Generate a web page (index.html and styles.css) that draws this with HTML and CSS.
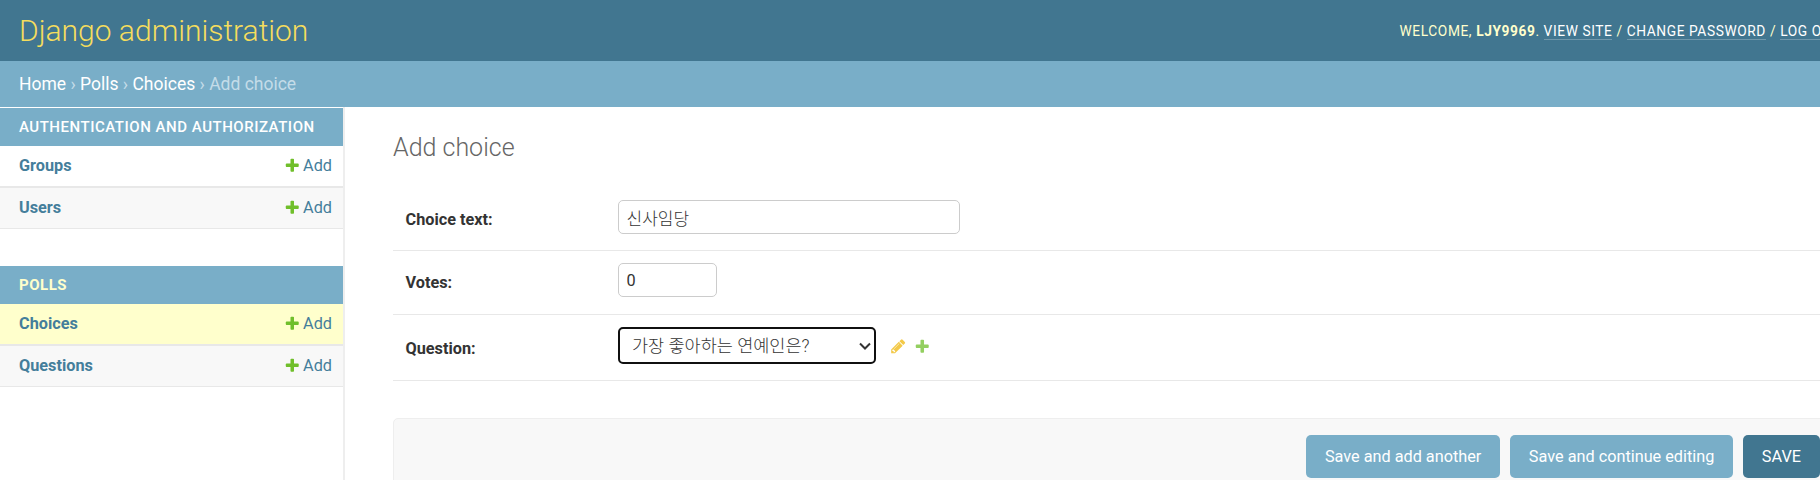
FILE: index.html
```html
<!DOCTYPE html>
<html lang="en">
<head>
    <meta charset="UTF-8">
    <title>Add choice | Django site admin</title>
    <link rel="stylesheet" href="styles.css">
</head>
<body>
    <svg class="icon-defs" width="0" height="0">
        <symbol id="icon-add" viewBox="0 0 1792 1792">
            <path d="M1600 796v192q0 40-28 68t-68 28h-416v416q0 40-28 68t-68 28h-192q-40 0-68-28t-28-68v-416h-416q-40 0-68-28t-28-68v-192q0-40 28-68t68-28h416v-416q0-40 28-68t68-28h192q40 0 68 28t28 68v416h416q40 0 68 28t28 68z"/>
        </symbol>
        <symbol id="icon-change" viewBox="0 0 1792 1792">
            <path d="M491 1536l91-91-235-235-91 91v107h128v128h107zm523-928q0-22-22-22-10 0-17 7l-542 542q-7 7-7 17 0 22 22 22 10 0 17-7l542-542q7-7 7-17zm-54-192l416 416-832 832h-416v-416zm683 96q0 53-37 90l-166 166-416-416 166-165q36-38 90-38 53 0 91 38l235 234q37 39 37 91z"/>
        </symbol>
    </svg>

    <div class="page">
        <header class="site-header">
            <h1 class="branding">Django administration</h1>
            <div class="user-tools">
                Welcome, <strong>ljy9969</strong>.
                <a href="#">View site</a> /
                <a href="#">Change password</a> /
                <a href="#">Log out</a>
            </div>
        </header>

        <nav class="breadcrumbs">
            <a href="#">Home</a> <span class="sep">›</span>
            <a href="#">Polls</a> <span class="sep">›</span>
            <a href="#">Choices</a> <span class="sep">›</span> Add choice
        </nav>

        <div class="main">
            <aside class="sidebar">
                <section class="app">
                    <h2 class="app-caption">Authentication and Authorization</h2>
                    <div class="model-row">
                        <a class="model-name" href="#">Groups</a>
                        <a class="addlink" href="#"><svg class="icon"><use href="#icon-add"/></svg>Add</a>
                    </div>
                    <div class="model-row alt">
                        <a class="model-name" href="#">Users</a>
                        <a class="addlink" href="#"><svg class="icon"><use href="#icon-add"/></svg>Add</a>
                    </div>
                </section>
                <section class="app">
                    <h2 class="app-caption current-app">Polls</h2>
                    <div class="model-row current">
                        <a class="model-name" href="#">Choices</a>
                        <a class="addlink" href="#"><svg class="icon"><use href="#icon-add"/></svg>Add</a>
                    </div>
                    <div class="model-row alt">
                        <a class="model-name" href="#">Questions</a>
                        <a class="addlink" href="#"><svg class="icon"><use href="#icon-add"/></svg>Add</a>
                    </div>
                </section>
            </aside>

            <main class="content">
                <h1 class="page-title">Add choice</h1>
                <form>
                    <div class="form-row">
                        <label class="field-label" for="id_choice_text">Choice text:</label>
                        <input class="text-input wide" id="id_choice_text" type="text" value="신사임당">
                    </div>
                    <div class="form-row votes-row">
                        <label class="field-label" for="id_votes">Votes:</label>
                        <input class="text-input short" id="id_votes" type="text" value="0">
                    </div>
                    <div class="form-row">
                        <label class="field-label" for="id_question">Question:</label>
                        <select class="select-input" id="id_question">
                            <option>가장 좋아하는 연예인은?</option>
                        </select>
                        <a class="related change" href="#"><svg class="icon"><use href="#icon-change"/></svg></a>
                        <a class="related add" href="#"><svg class="icon"><use href="#icon-add"/></svg></a>
                    </div>
                    <div class="submit-row">
                        <button class="btn" type="button">Save and add another</button>
                        <button class="btn" type="button">Save and continue editing</button>
                        <button class="btn default" type="button">SAVE</button>
                    </div>
                </form>
            </main>
        </div>
    </div>
</body>
</html>
```

FILE: styles.css
```css
/* --- General --- */
html, body {
    margin: 0;
    padding: 0;
    height: 100%;
    overflow: hidden;
    background: #fff;
}

body {
    font-family: Roboto, "Noto Sans CJK KR", sans-serif;
    font-size: 17.5px;
    color: #333;
}

a { text-decoration: none; color: #447e9b; }

.icon-defs { position: absolute; }

/* page runs wider than the window, the right side is cut off */
.page { width: 1888px; }

/* --- Header --- */
.site-header {
    box-sizing: border-box;
    height: 61px;
    padding: 0 19px;
    background: #417690;
    display: flex;
    justify-content: space-between;
    align-items: center;
}

.branding {
    margin: 0 0 1px;
    font-size: 30px;
    font-weight: 300;
    color: #f5dd5d;
}

.user-tools {
    margin-right: 29px;
    font-size: 13.75px;
    letter-spacing: 0.58px;
    text-transform: uppercase;
    color: #ffc;
}

.user-tools a {
    color: #fff;
    border-bottom: 1px solid rgba(255, 255, 255, 0.25);
}

.breadcrumbs {
    box-sizing: border-box;
    height: 46px;
    padding: 0 19px;
    line-height: 47px;
    background: #79aec8;
    color: #c4dce8;
}

.breadcrumbs a { color: #fff; }
.breadcrumbs .sep { color: #c4dce8; }

/* --- Sidebar --- */
.main { display: flex; }

.sidebar {
    flex: none;
    box-sizing: border-box;
    width: 345px;
    min-height: 373px;
    padding-top: 1px;
    border-right: 2px solid #eee;
}

.app { margin-bottom: 37px; }

.app-caption {
    margin: 0;
    height: 38px;
    padding: 0 19px;
    line-height: 38px;
    background: #79aec8;
    color: #fff;
    font-size: 15px;
    font-weight: 500;
    letter-spacing: 0.53px;
    text-transform: uppercase;
    white-space: nowrap;
}

.app-caption.current-app { color: #ffc; font-weight: 700; }

.model-row {
    display: flex;
    justify-content: space-between;
    align-items: center;
    height: 39px;
    padding: 0 11px 1px 19px;
    border-bottom: 2px solid #e8e8e8;
    font-size: 16.25px;
}

.app .model-row:last-child { border-bottom-width: 1px; }
.model-row.alt { background: #f8f8f8; }
.model-row.current { background: #ffc; }
.model-name { font-weight: 700; }

.addlink { display: flex; align-items: center; }

.icon {
    display: block;
    width: 16.5px;
    height: 16.5px;
    fill: #70bf2b;
}

.addlink .icon { margin-right: 3px; }

/* --- Content --- */
.content {
    flex: 1;
    min-width: 0;
    padding: 25px 50px 0 48px;
}

.page-title {
    margin: 0 0 25px;
    font-size: 25px;
    font-weight: 300;
    line-height: 31px;
    color: #666;
}

.form-row {
    display: flex;
    align-items: center;
    padding: 12px 12.5px 16px;
    border-bottom: 1px solid #e8e8e8;
}

.form-row.votes-row { padding-bottom: 17px; }

.field-label {
    flex: none;
    width: 212px;
    padding-top: 5px;
    font-size: 16.25px;
    font-weight: 700;
}

.text-input {
    box-sizing: border-box;
    height: 34px;
    padding: 0 8px;
    border: 1px solid #ccc;
    border-radius: 5px;
    font-family: Roboto, "Noto Sans CJK KR", sans-serif;
    font-size: 16.25px;
    color: #333;
}

.text-input.wide { width: 342px; font-size: 17px; font-weight: 300; }
.text-input.short { width: 99px; }

.select-input {
    box-sizing: border-box;
    width: 258px;
    height: 37px;
    padding: 0 24px 0 12.5px;
    border: 2px solid #101010;
    border-radius: 5px;
    appearance: none;
    background: #fff url("data:image/svg+xml,%3Csvg xmlns='http://www.w3.org/2000/svg' width='12' height='8'%3E%3Cpath d='M1 1.5l5 5 5-5' fill='none' stroke='%23333' stroke-width='2'/%3E%3C/svg%3E") no-repeat right 3px center;
    font-family: Roboto, "Noto Sans CJK KR", sans-serif;
    font-size: 17.5px;
    font-weight: 300;
    color: #333;
}

.related { opacity: 0.75; margin-top: 2px; }
.related.change { margin-left: 14px; }
.related.change .icon { fill: #efb80b; }
.related.add { margin-left: 8px; }

/* --- Buttons --- */
.submit-row {
    display: flex;
    justify-content: flex-end;
    gap: 10.5px;
    margin-top: 37px;
    padding: 16px 17.5px;
    background: #f8f8f8;
    border: 1px solid #eee;
    border-radius: 5px;
}

.btn {
    height: 43px;
    padding: 0 18.5px;
    border: none;
    border-radius: 5px;
    background: #79aec8;
    color: #fff;
    font-family: Roboto, sans-serif;
    font-size: 16.25px;
}

.btn.default { background: #417690; font-weight: 400; }
```
